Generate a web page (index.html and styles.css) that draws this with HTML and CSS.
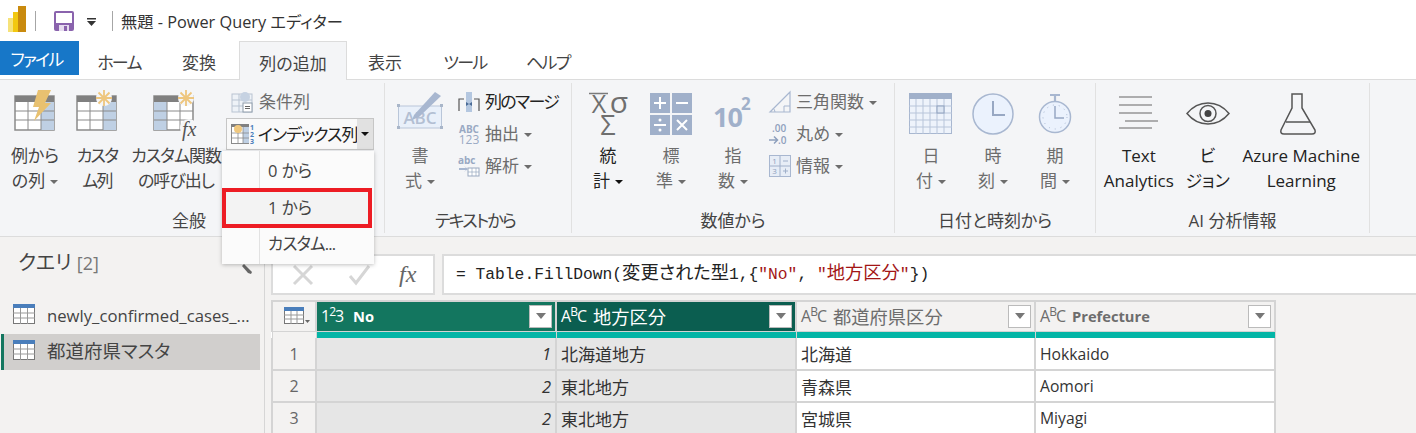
FILE: index.html
```html
<!DOCTYPE html>
<html lang="ja">
  <head>
    <meta charset="utf-8">
    <title>無題 - Power Query エディター</title>
    <link rel="stylesheet" href="styles.css">
  </head>
  <body>
    <div class="titlebar">
      <svg class="logo" width="20" height="26" viewBox="0 0 20 26">
        <rect x="0" y="12" width="9" height="14" fill="#f6e27a"/>
        <rect x="5" y="6" width="8" height="20" fill="#f2c811"/>
        <rect x="10" y="0" width="8" height="26" fill="#c98a0e"/>
      </svg>
      <span class="title-sep sep-a"></span>
      <svg class="save" width="20" height="20" viewBox="0 0 20 20">
        <rect x="0" y="0" width="20" height="20" rx="2" fill="#8a63ad"/>
        <rect x="2" y="2" width="16" height="10" fill="#fff"/>
        <rect x="5" y="14" width="10" height="6" fill="#e6dcef"/>
        <rect x="10" y="15" width="3" height="5" fill="#8a63ad"/>
      </svg>
      <svg class="qat-drop" width="9" height="8" viewBox="0 0 9 8">
        <rect x="0" y="0" width="9" height="1.500" fill="#333"/>
        <path d="M0 3h9L4.500 8z" fill="#333"/>
      </svg>
      <span class="title-sep sep-b"></span>
      <span class="title-text">無題 - Power Query エディター</span>
    </div>

    <div class="tabs">
      <div class="tab tab-file tight">ファイル</div>
      <div class="tab tab-home tight">ホーム</div>
      <div class="tab tab-conv">変換</div>
      <div class="tab tab-active">列の追加</div>
      <div class="tab tab-view">表示</div>
      <div class="tab tab-tool tight">ツール</div>
      <div class="tab tab-help tight">ヘルプ</div>
    </div>

    <div class="ribbon">
      <!-- 全般 -->
      <div class="group group-general">
        <div class="group-body">
          <div class="big w62">
            <svg class="big-icon" width="42" height="42" viewBox="0 -1 42 42">
              <rect x="1" y="6" width="39" height="34" fill="#fff" stroke="#8a8a8a" stroke-width="1.500"/>
              <rect x="1" y="6" width="39" height="6" fill="#808080"/>
              <rect x="27" y="12" width="13" height="28" fill="#bfd0e4"/>
              <path d="M1 21h39M1 30h39M14 12v28M27 12v28" stroke="#8a8a8a" fill="none"/>
              <path d="M24 0h13l-6 13h6L20 31l5-14h-6z" fill="#e8c170"/>
            </svg>
            <div class="big-label">例から<br>の列<i class="caret"></i></div>
          </div>
          <div class="big w62">
            <svg class="big-icon" width="42" height="42" viewBox="0 -1 42 42">
              <rect x="1" y="6" width="39" height="34" fill="#fff" stroke="#8a8a8a" stroke-width="1.500"/>
              <rect x="1" y="6" width="39" height="6" fill="#808080"/>
              <rect x="27" y="12" width="13" height="28" fill="#bfd0e4"/>
              <path d="M1 21h39M1 30h39M14 12v28M27 12v28" stroke="#8a8a8a" fill="none"/>
              <circle cx="28" cy="8" r="8" fill="#f5f6f8"/>
              <path d="M28 0v16M20 8h16M22.500 2.500l11 11M33.500 2.500l-11 11" stroke="#eec67e" stroke-width="1.800"/>
            </svg>
            <div class="big-label tight">カスタ<br>ム列</div>
          </div>
          <div class="big w96">
            <svg class="big-icon" width="46" height="42" viewBox="0 -1 46 42">
              <rect x="1" y="6" width="39" height="34" fill="#fff" stroke="#8a8a8a" stroke-width="1.500"/>
              <rect x="1" y="6" width="39" height="6" fill="#808080"/>
              <rect x="1" y="12" width="13" height="28" fill="#bfd0e4"/>
              <path d="M1 21h39M1 30h39M14 12v28M27 12v28" stroke="#8a8a8a" fill="none"/>
              <circle cx="33" cy="8" r="8" fill="#f5f6f8"/>
              <path d="M33 0v16M25 8h16M27.500 2.500l11 11M38.500 2.500l-11 11" stroke="#eec67e" stroke-width="1.800"/>
              <circle cx="36" cy="38" r="9" fill="#f5f6f8"/>
              <text x="29" y="46" class="fx-glyph">fx</text>
            </svg>
            <div class="big-label tight-s">カスタム関数<br>の呼び出し</div>
          </div>
          <div class="small-col small-col-general">
            <div class="small small-cond">
              <svg width="22" height="22" viewBox="0 0 22 22">
                <rect x="1" y="3" width="20" height="18" fill="#eef2f7" stroke="#b9c4d2"/>
                <path d="M1 9h20M1 15h20M8 3v18" stroke="#b9c4d2"/>
                <circle cx="14" cy="6" r="5" fill="#c6d2e2"/>
                <rect x="12" y="12" width="9" height="9" fill="#fff" stroke="#8e9baa"/>
                <path d="M14 15.500h5M14 17.500h5" stroke="#666"/>
              </svg>
              <span class="small-text muted">条件列</span>
            </div>
            <div class="split">
              <div class="split-main">
                <svg width="18" height="20" viewBox="0 0 18 20">
                  <rect x=".5" y=".5" width="17" height="19" fill="#fff" stroke="#8a8a8a"/>
                  <rect x="0" y="0" width="18" height="3" fill="#808080"/>
                  <rect x="12" y="3" width="6" height="16" fill="#bfd0e4"/>
                  <path d="M1 9h17M1 14h17M7 3v16M12 3v16" stroke="#8a8a8a" stroke-width=".8"/>
                  <circle cx="7" cy="5" r="4" fill="#f0c87e"/>
                </svg>
                <svg class="split-nums" width="6" height="20" viewBox="0 0 6 20">
                  <text x="0" y="6" class="nums-glyph">1</text>
                  <text x="0" y="13" class="nums-glyph">2</text>
                  <text x="0" y="20" class="nums-glyph">3</text>
                </svg>
                <span class="split-text tight-s">インデックス列</span>
              </div>
              <div class="split-arrow"><i class="caret caret-dark"></i></div>
            </div>
          </div>
        </div>
        <div class="group-label">全般</div>
      </div>

      <!-- テキストから -->
      <div class="group group-text">
        <div class="group-body">
          <div class="big w70">
            <svg class="big-icon" width="46" height="42" viewBox="0 0 46 42">
              <rect x="1.500" y="17" width="43" height="22" fill="#e9f0fa" stroke="#b9c6d9"/>
              <rect x="0" y="15" width="3" height="3" fill="#a9b6c9"/>
              <rect x="43" y="15" width="3" height="3" fill="#a9b6c9"/>
              <rect x="0" y="37" width="3" height="3" fill="#a9b6c9"/>
              <rect x="43" y="37" width="3" height="3" fill="#a9b6c9"/>
              <text x="23" y="35" class="abc-glyph">ABC</text>
              <path d="M17 26L38 3l6 4-22 21-7 3z" fill="#a8b7d0"/>
            </svg>
            <div class="big-label muted">書<br>式<i class="caret"></i></div>
          </div>
          <div class="small-col small-col-text">
            <div class="small">
              <svg width="22" height="22" viewBox="0 0 22 22">
                <path d="M1 20V8h5M21 20V8h-5" fill="none" stroke="#555" stroke-width="1.200"/>
                <rect x="8" y="1" width="6" height="20" fill="#b4c7e0"/>
                <path d="M8 11l3 2-3 2zM14 11l-3 2 3 2z" fill="#4a6a96"/>
              </svg>
              <span class="small-text dark tight">列のマージ</span>
            </div>
            <div class="small">
              <svg width="22" height="22" viewBox="0 0 22 22">
                <text x="11" y="10" class="mini-abc">ABC</text>
                <text x="11" y="21" class="mini-123">123</text>
              </svg>
              <span class="small-text muted">抽出<i class="caret"></i></span>
            </div>
            <div class="small">
              <svg width="22" height="22" viewBox="0 0 22 22">
                <text x="0" y="9" class="mini-abc-low">abc</text>
                <path d="M1 13h7l-2-2 4 3-4 3 2-2H1z" fill="#a8b7d0"/>
                <rect x="10" y="13" width="11" height="8" fill="#fff" stroke="#9aa9c0"/>
                <path d="M10 17h11M14 13v8M18 13v8" stroke="#9aa9c0" stroke-width=".7"/>
              </svg>
              <span class="small-text muted">解析<i class="caret"></i></span>
            </div>
          </div>
        </div>
        <div class="group-label tight">テキストから</div>
      </div>

      <!-- 数値から -->
      <div class="group group-num">
        <div class="group-body">
          <div class="big w72">
            <svg class="big-icon" width="42" height="42" viewBox="0 0 42 42">
              <path d="M2 4.500h19" stroke="#7a7a7a" stroke-width="1.500"/>
              <text x="12" y="24" class="stat-glyph">X</text>
              <text x="32" y="24" class="stat-sigma">σ</text>
              <text x="21" y="46" class="stat-sum">Σ</text>
            </svg>
            <div class="big-label dark">統<br>計<i class="caret caret-dark"></i></div>
          </div>
          <div class="big w54">
            <svg class="big-icon" width="42" height="42" viewBox="0 -4 42 42">
              <rect x="0" y="0" width="20" height="20" fill="#a0b0ca"/>
              <rect x="22" y="0" width="20" height="20" fill="#a0b0ca"/>
              <rect x="0" y="22" width="20" height="20" fill="#a0b0ca"/>
              <rect x="22" y="22" width="20" height="20" fill="#a0b0ca"/>
              <path d="M4 10h12M10 4v12M26 10h12M4 32h12M27 27l10 10M37 27L27 37" stroke="#fff" stroke-width="2"/>
              <circle cx="10" cy="27" r="1.500" fill="#fff"/>
              <circle cx="10" cy="37" r="1.500" fill="#fff"/>
            </svg>
            <div class="big-label muted">標<br>準<i class="caret"></i></div>
          </div>
          <div class="big w70">
            <svg class="big-icon" width="42" height="42" viewBox="0 0 42 42">
              <text x="1" y="38" class="pow-base">10</text>
              <text x="29" y="21" class="pow-exp">2</text>
            </svg>
            <div class="big-label muted">指<br>数<i class="caret"></i></div>
          </div>
          <div class="small-col small-col-num">
            <div class="small">
              <svg width="22" height="22" viewBox="0 0 22 22">
                <path d="M1 21L21 1v20z" fill="none" stroke="#a8b7d0" stroke-width="1.200"/>
                <path d="M6 21a6 6 0 0 0-2-4M15 21v-6h6" fill="none" stroke="#a8b7d0"/>
              </svg>
              <span class="small-text muted">三角関数<i class="caret"></i></span>
            </div>
            <div class="small">
              <svg width="22" height="22" viewBox="0 0 22 22">
                <text x="3" y="9" class="round-glyph">.00</text>
                <text x="9" y="21" class="round-glyph">.0</text>
                <path d="M0 17h8M5 13.500l3.500 3.500-3.500 3.500" fill="none" stroke="#8ea0bd" stroke-width="1.500"/>
              </svg>
              <span class="small-text muted">丸め<i class="caret"></i></span>
            </div>
            <div class="small">
              <svg width="22" height="22" viewBox="0 0 22 22">
                <rect x=".5" y=".5" width="21" height="21" fill="#e7edf6" stroke="#a8b7d0"/>
                <path d="M11 1v20M1 11h20M14 6h5M14 16h5M16.500 13.500v5" stroke="#a0b0ca" fill="none"/>
                <text x="5.500" y="9" class="info-glyph">1</text>
                <text x="5.500" y="19" class="info-glyph">3</text>
              </svg>
              <span class="small-text muted">情報<i class="caret"></i></span>
            </div>
          </div>
        </div>
        <div class="group-label">数値から</div>
      </div>

      <!-- 日付と時刻から -->
      <div class="group group-date">
        <div class="group-body">
          <div class="big w72">
            <svg class="big-icon" width="44" height="42" viewBox="0 -4 44 42">
              <rect x=".5" y=".5" width="42" height="40" fill="#eef3fb" stroke="#a8b7d0"/>
              <rect x="0" y="0" width="43" height="6" fill="#a0b0ca"/>
              <path d="M0 13h43M0 20h43M0 27h43M0 34h43M7 6v35M14 6v35M21 6v35M28 6v35M35 6v35" stroke="#b8c5da"/>
              <rect x="28" y="13" width="7" height="7" fill="#dde6f3" stroke="#8ea0bd"/>
            </svg>
            <div class="big-label muted">日<br>付<i class="caret"></i></div>
          </div>
          <div class="big w52">
            <svg class="big-icon" width="42" height="42" viewBox="0 -4 42 42">
              <circle cx="21" cy="21" r="20" fill="#ebf2fd" stroke="#a8b7d0" stroke-width="1.500"/>
              <path d="M21 8v14h12" fill="none" stroke="#98a8c3" stroke-width="2"/>
            </svg>
            <div class="big-label muted">時<br>刻<i class="caret"></i></div>
          </div>
          <div class="big w72">
            <svg class="big-icon" width="34" height="42" viewBox="0 -4 34 42">
              <path d="M12 2h10M17 2v6" stroke="#a8b7d0" stroke-width="2.200"/>
              <circle cx="17" cy="24" r="15.500" fill="#ebf2fd" stroke="#a8b7d0" stroke-width="1.500"/>
              <circle cx="17" cy="24" r="12" fill="none" stroke="#a8b7d0" stroke-dasharray="1 5"/>
              <path d="M17 13v12h9" fill="none" stroke="#98a8c3" stroke-width="1.500"/>
            </svg>
            <div class="big-label muted">期<br>間<i class="caret"></i></div>
          </div>
        </div>
        <div class="group-label">日付と時刻から</div>
      </div>

      <!-- AI 分析情報 -->
      <div class="group group-ai">
        <div class="group-body">
          <div class="big w86">
            <svg class="big-icon" width="40" height="42" viewBox="0 0 40 42">
              <path d="M0 8h33M0 16h33M0 24h33M6 32h33M0 39h33" stroke="#666" stroke-width="1.200"/>
            </svg>
            <div class="big-label dark">Text<br>Analytics</div>
          </div>
          <div class="big w52">
            <svg class="big-icon" width="44" height="42" viewBox="0 0 44 42">
              <path d="M1 24.500C8 16 16 14 22 14s14 2 21 10.500C36 33 28 35 22 35S8 33 1 24.500z" fill="none" stroke="#555" stroke-width="1.500"/>
              <circle cx="22" cy="24.500" r="8" fill="none" stroke="#555" stroke-width="1.500"/>
              <circle cx="22" cy="24.500" r="3.500" fill="#444"/>
            </svg>
            <div class="big-label dark">ビ<br>ジョン</div>
          </div>
          <div class="big w136">
            <svg class="big-icon flask" width="38" height="42" viewBox="0 0 38 42">
              <path d="M13 5h10v14l13 22q1 4-3 4H5q-4 0-3-4l11-22z" fill="none" stroke="#555" stroke-width="1.500"/>
              <path d="M7 33h24" stroke="#555" stroke-width="1.500"/>
            </svg>
            <div class="big-label dark">Azure Machine<br>Learning</div>
          </div>
        </div>
        <div class="group-label">AI 分析情報</div>
      </div>
    </div>

    <div class="main">
      <div class="queries">
        <div class="queries-title">
          <span>クエリ <span class="queries-count">[2]</span></span>
          <svg class="pin" width="10" height="10" viewBox="0 0 10 10">
            <path d="M0 2l2-2 8 8-1 2-3-1z" fill="#666"/>
          </svg>
        </div>
        <div class="query">
          <svg width="22" height="20" viewBox="0 0 22 20">
            <rect x=".5" y=".5" width="21" height="19" fill="#fff" stroke="#777"/>
            <rect x="0" y="0" width="22" height="4" fill="#4a7ebb"/>
            <path d="M0 9h22M0 14h22M7.500 4v16M14.500 4v16" stroke="#999"/>
          </svg>
          <span class="query-name query-latin">newly_confirmed_cases_...</span>
        </div>
        <div class="query query-on">
          <svg width="22" height="20" viewBox="0 0 22 20">
            <rect x=".5" y=".5" width="21" height="19" fill="#fff" stroke="#777"/>
            <rect x="0" y="0" width="22" height="4" fill="#4a7ebb"/>
            <path d="M0 9h22M0 14h22M7.500 4v16M14.500 4v16" stroke="#999"/>
          </svg>
          <span class="query-name">都道府県マスタ</span>
        </div>
      </div>

      <div class="content">
        <div class="formula-row">
          <div class="fx-box">
            <svg width="24" height="24" viewBox="0 0 24 24">
              <path d="M3 3l18 18M21 3L3 21" stroke="#d6d6d6" stroke-width="3"/>
            </svg>
            <svg class="fx-check" width="24" height="24" viewBox="0 0 24 24">
              <path d="M3 13l6 7L22 3" fill="none" stroke="#d6d6d6" stroke-width="3"/>
            </svg>
            <span class="fx-text">fx</span>
          </div>
          <div class="formula">= Table.FillDown(<span class="code-jp">変更された型</span>1,{<span class="str">"No"</span>, <span class="str">"<span class="code-jp">地方区分</span>"</span>})</div>
        </div>

        <table class="grid">
          <colgroup>
            <col class="col-idx">
            <col class="col-no">
            <col class="col-area">
            <col class="col-pref">
            <col class="col-en">
          </colgroup>
          <thead>
            <tr class="head">
              <th class="corner">
                <svg width="26" height="18" viewBox="0 0 26 18">
                  <rect x=".5" y=".5" width="19" height="16" fill="#fff" stroke="#777"/>
                  <rect x="0" y="0" width="20" height="4" fill="#4a7ebb"/>
                  <path d="M0 8h20M0 12h20M7 4v13M13 4v13" stroke="#999"/>
                  <path d="M21 13h5l-2.500 3z" fill="#666"/>
                </svg>
              </th>
              <th class="h-sel">
                <div class="th-in"><span class="type">1<sup>2</sup>3</span><span class="th-latin">No</span><span class="filter"><i></i></span></div>
              </th>
              <th class="h-sel-dark">
                <div class="th-in"><span class="type">A<sup>B</sup>C</span><span class="th-jp">地方区分</span><span class="filter"><i></i></span></div>
              </th>
              <th class="h-plain">
                <div class="th-in"><span class="type">A<sup>B</sup>C</span><span class="th-jp">都道府県区分</span><span class="filter"><i></i></span></div>
              </th>
              <th class="h-plain">
                <div class="th-in"><span class="type">A<sup>B</sup>C</span><span class="th-latin">Prefecture</span><span class="filter"><i></i></span></div>
              </th>
            </tr>
            <tr class="quality">
              <th class="q-blank"></th><th></th><th></th><th></th><th></th>
            </tr>
          </thead>
          <tbody>
            <tr class="row-first">
              <td class="idx">1</td><td class="num sel">1</td><td class="sel">北海道地方</td><td>北海道</td><td class="en">Hokkaido</td>
            </tr>
            <tr>
              <td class="idx">2</td><td class="num sel">2</td><td class="sel">東北地方</td><td>青森県</td><td class="en">Aomori</td>
            </tr>
            <tr>
              <td class="idx">3</td><td class="num sel">2</td><td class="sel">東北地方</td><td>宮城県</td><td class="en">Miyagi</td>
            </tr>
          </tbody>
        </table>
      </div>
    </div>

    <!-- インデックス列のドロップダウン -->
    <div class="menu">
      <div class="menu-item">0 から</div>
      <div class="menu-item menu-hot">1 から</div>
      <div class="menu-item menu-last">カスタム...</div>
    </div>
  </body>
</html>
```

FILE: styles.css
```css
* {
  box-sizing: border-box;
}

html,
body {
  margin: 0;
  height: 433px;
  overflow: hidden;
}

body {
  position: relative;
  background-color: #f3f2f1;
  color: #333;
  font-family: "Open Sans", "Noto Sans CJK JP", sans-serif;
  font-size: 17px;
  font-feature-settings: "palt";
}

svg {
  overflow: visible;
  flex: none;
}

/* カタカナが多い文字列は詰める */
.tight {
  letter-spacing: -1.700px;
}

.tight-s {
  letter-spacing: -1px;
}

/* タイトルバー */
.titlebar {
  display: flex;
  align-items: center;
  height: 41px;
  background-color: #fff;
}

.logo {
  margin: 0 0 4px 8px;
}

.title-sep {
  width: 1px;
  height: 20px;
  background-color: #a6a6a6;
}

.sep-a {
  margin-left: 7px;
}

.save {
  margin-left: 18px;
}

.qat-drop {
  margin: 3px 0 0 13px;
}

.sep-b {
  margin-left: 16px;
}

.title-text {
  margin-left: 8px;
  font-size: 16.300px;
  color: #333;
}

/* タブ */
.tabs {
  display: flex;
  height: 39px;
  background-color: #fff;
  border-bottom: 1px solid #dcdcdc;
}

.tab {
  display: flex;
  align-items: center;
  justify-content: center;
  height: 38px;
  padding-top: 2px;
  font-size: 17px;
  color: #444;
}

.tab-file {
  width: 79px;
  height: 34px;
  padding: 0 6px 0 0;
  background-color: #1777c8;
  color: #fff;
}

.tab-home,
.tab-conv {
  width: 80px;
}

.tab-active {
  width: 108px;
  height: 39px;
  background-color: #f4f5f7;
  border: 1px solid #dcdcdc;
  border-bottom: none;
}

.tab-view {
  width: 76px;
}

.tab-tool {
  width: 84px;
}

.tab-help {
  width: 82px;
}

/* リボン */
.ribbon {
  display: flex;
  height: 157px;
  background-color: #f4f5f7;
  border-bottom: 1px solid #dcdcdc;
}

.group {
  display: flex;
  flex-direction: column;
  height: 150px;
  margin-top: 3px;
  border-right: 1px solid #e1e1e1;
}

.group-general {
  width: 385px;
  padding-left: 4px;
}

.group-general .group-label {
  margin-right: 10px;
}

.group-text {
  width: 187px;
}

.group-text .group-label {
  margin-right: 6px;
}

.group-num {
  width: 323px;
}

.group-date {
  width: 201px;
}

.group-ai {
  width: 274px;
}

.group-body {
  display: flex;
  flex: 1;
  padding-top: 6px;
}

.group-label {
  height: 24px;
  text-align: center;
  font-size: 17px;
  line-height: 24px;
  color: #444;
}

.big {
  display: flex;
  flex-direction: column;
  align-items: center;
}

.big-icon {
  height: 42px;
}

.flask {
  margin-right: 6px;
}

.big-label {
  margin-top: 12px;
  text-align: center;
  font-size: 17px;
  line-height: 25px;
  color: #444;
  white-space: nowrap;
}

.w52 {
  width: 52px;
}

.w54 {
  width: 54px;
}

.w62 {
  width: 62px;
}

.w70 {
  width: 70px;
}

.w72 {
  width: 72px;
}

.w86 {
  width: 86px;
}

.w96 {
  width: 96px;
}

.w136 {
  width: 136px;
}

.muted {
  color: #6d6d6d;
}

.dark {
  color: #222;
}

.caret {
  display: inline-block;
  margin-left: 5px;
  vertical-align: middle;
  border-left: 4px solid transparent;
  border-right: 4px solid transparent;
  border-top: 4px solid #6d6d6d;
}

.caret-dark {
  border-top-color: #111;
}

.small-col {
  display: flex;
  flex-direction: column;
  margin-top: -3px;
}

.small-col-general {
  margin-left: 2px;
}

.small-col-text {
  margin-left: 3px;
}

.small-col-num {
  margin-left: 1px;
}

.small {
  display: flex;
  align-items: center;
  gap: 5px;
  height: 32px;
}

.small-cond {
  gap: 6px;
  padding-left: 5px;
}

.small-text {
  margin-bottom: 4px;
  font-size: 17px;
  white-space: nowrap;
}

.split {
  display: flex;
  width: 148px;
  height: 32px;
  border: 1px solid #c6c6c6;
  background-color: #f9f9f9;
}

.split-main {
  display: flex;
  flex: 1;
  align-items: center;
  padding-left: 4px;
}

.split-nums {
  margin-left: 1px;
}

.split-text {
  margin: 0 0 2px 2px;
  font-size: 17px;
  color: #222;
  white-space: nowrap;
}

.split-arrow {
  display: flex;
  align-items: center;
  justify-content: center;
  width: 17px;
  background-color: #e1e1e1;
}

.split-arrow .caret {
  margin-left: 0;
}

/* SVG 内の文字 */
.fx-glyph {
  font-family: "Liberation Serif", serif;
  font-style: italic;
  font-size: 20px;
  fill: #555;
}

.nums-glyph {
  font-family: "Open Sans", sans-serif;
  font-size: 7px;
  font-weight: 700;
  fill: #4a7ebb;
}

.abc-glyph {
  font-family: "Open Sans", sans-serif;
  font-size: 17px;
  font-weight: 600;
  text-anchor: middle;
  fill: #b3bfd3;
}

.mini-abc {
  font-family: "Open Sans", sans-serif;
  font-size: 10px;
  font-weight: 700;
  text-anchor: middle;
  fill: #99a9c3;
}

.mini-123 {
  font-family: "Open Sans", sans-serif;
  font-size: 12px;
  text-anchor: middle;
  fill: #99a9c3;
}

.mini-abc-low {
  font-family: "Open Sans", sans-serif;
  font-size: 10px;
  font-weight: 700;
  fill: #99a9c3;
}

.stat-glyph {
  font-family: "Open Sans", sans-serif;
  font-size: 25px;
  text-anchor: middle;
  fill: #6f6f6f;
}

.stat-sigma {
  font-family: "Open Sans", sans-serif;
  font-size: 30px;
  text-anchor: middle;
  fill: #6f6f6f;
}

.stat-sum {
  font-family: "Open Sans", sans-serif;
  font-size: 27px;
  text-anchor: middle;
  fill: #6f6f6f;
}

.pow-base {
  font-family: "Open Sans", sans-serif;
  font-size: 27px;
  font-weight: 700;
  letter-spacing: -1px;
  fill: #a0b0ca;
}

.pow-exp {
  font-family: "Open Sans", sans-serif;
  font-size: 17px;
  font-weight: 700;
  fill: #a0b0ca;
}

.round-glyph {
  font-family: "Open Sans", sans-serif;
  font-size: 10px;
  font-weight: 600;
  fill: #8ea0bd;
}

.info-glyph {
  font-family: "Open Sans", sans-serif;
  font-size: 8px;
  text-anchor: middle;
  fill: #8ea0bd;
}

/* 下部 */
.main {
  display: flex;
  height: 196px;
}

.queries {
  width: 265px;
  height: 196px;
  padding-top: 13px;
  border-right: 1px solid #d6d6d6;
}

.queries-title {
  display: flex;
  justify-content: space-between;
  height: 48px;
  padding: 0 12px 0 18px;
  font-size: 20px;
  line-height: 26px;
  color: #444;
}

.queries-count {
  font-size: 18px;
  color: #777;
}

.pin {
  margin-top: 14px;
}

.query {
  display: flex;
  align-items: center;
  gap: 12px;
  width: 259px;
  height: 36px;
  padding-left: 12px;
  margin-left: 1px;
  font-size: 18.500px;
  color: #444;
  border-left: 3px solid transparent;
}

.query svg {
  margin-left: -3px;
  margin-top: -4px;
}

.query-on {
  background-color: #d1cfcd;
  border-left-color: #13765f;
}

.query-on .query-name {
  margin-bottom: 4px;
}

.query-name {
  white-space: nowrap;
}

.query-latin {
  margin-bottom: 2px;
  font-size: 16.700px;
}

.content {
  flex: 1;
  padding: 17px 0 0 6px;
}

.formula-row {
  display: flex;
  gap: 7px;
  height: 41px;
}

.fx-box {
  display: flex;
  align-items: center;
  gap: 28px;
  width: 164px;
  padding-left: 18px;
  background-color: #fff;
  border: 2px solid #dcdcdc;
}

.fx-check {
  margin-left: 4px;
}

.fx-text {
  font-family: "Liberation Serif", serif;
  font-style: italic;
  font-size: 24px;
  color: #666;
}

.formula {
  flex: 1;
  padding-left: 12px;
  line-height: 37px;
  background-color: #fff;
  border: 1px solid #dcdcdc;
  border-width: 2px 0 2px 2px;
  font-family: "Liberation Mono", "Noto Sans CJK JP", monospace;
  font-size: 16.300px;
  color: #222;
  white-space: nowrap;
}

.code-jp {
  font-size: 18.300px;
}

.str {
  color: #a31515;
}

/* テーブル */
.grid {
  width: 1003px;
  margin-top: 5px;
  table-layout: fixed;
  border-collapse: collapse;
  background-color: #fff;
  font-size: 17px;
}

.col-idx {
  width: 44px;
}

.col-no {
  width: 240px;
}

.col-area {
  width: 240px;
}

.col-pref {
  width: 239px;
}

.col-en {
  width: 240px;
}

.grid th,
.grid td {
  padding: 0;
  border: 2px solid #d4d4d4;
}

.head {
  height: 30px;
}

.grid .head th {
  border-bottom-width: 1px;
}

.grid .corner {
  background-color: #f3f2f1;
  padding-left: 4px;
  text-align: left;
}

.corner svg {
  display: block;
  margin-left: 7px;
}

.h-sel {
  background-color: #13765f;
  color: #fff;
}

.h-sel-dark {
  background-color: #0b5e50;
  color: #fff;
}

.h-plain {
  background-color: #f3f2f1;
  color: #6d6d6d;
}

.th-in {
  display: flex;
  align-items: center;
  height: 28px;
  padding: 0 3px 0 4px;
}

.type {
  flex: none;
  width: 26px;
  text-align: left;
  font-size: 16px;
  font-weight: 400;
  letter-spacing: -1px;
}

.type sup {
  font-size: 12px;
  line-height: 0;
}

.th-latin {
  flex: 1;
  margin-left: 6px;
  text-align: left;
  font-size: 14.700px;
  font-weight: 700;
}

.th-jp {
  flex: 1;
  margin-left: 6px;
  text-align: left;
  font-size: 18.300px;
  font-weight: 400;
}

.filter {
  display: flex;
  align-items: center;
  justify-content: center;
  flex: none;
  width: 23px;
  height: 23px;
  background-color: #fff;
  border: 1px solid #bbb;
}

.filter i {
  border-left: 5px solid transparent;
  border-right: 5px solid transparent;
  border-top: 6px solid #777;
}

.grid .quality {
  height: 7px;
}

.grid .quality th {
  background-color: #03b5a6;
  border-top-width: 1px;
  border-bottom-width: 0;
  border-left-width: 1px;
  border-right-width: 1px;
}

.grid .quality .q-blank {
  background-color: #f3f2f1;
}

.grid .row-first td {
  border-top-width: 0;
}

.grid tbody tr {
  height: 32px;
}

.grid td {
  padding: 0 4px;
  color: #333;
  white-space: nowrap;
}

.grid .en {
  font-size: 15.700px;
}

.grid .idx {
  background-color: #f3f2f1;
  text-align: center;
  font-size: 16px;
  color: #666;
}

.grid .sel {
  background-color: #e6e6e6;
}

.grid .num {
  text-align: right;
  font-size: 16.500px;
  font-style: italic;
}

/* メニュー */
.menu {
  position: absolute;
  left: 222px;
  top: 151px;
  width: 152px;
  height: 113px;
  background-color: #fbfbfb;
  background-image: linear-gradient(#e2e2e2, #e2e2e2);
  background-size: 1px 100%;
  background-position: 37px 0;
  background-repeat: no-repeat;
  box-shadow: 0 1px 4px rgba(0, 0, 0, 0.25);
}

.menu-item {
  display: flex;
  align-items: center;
  height: 37px;
  padding-left: 46px;
  font-size: 16.500px;
  color: #444;
}

.menu-hot {
  width: 150px;
  height: 40px;
  background-color: #f3f3f3;
  border: 4px solid #ed1c24;
  padding: 0 0 3px 42px;
}

.menu-last {
  height: 36px;
  padding-bottom: 6px;
  letter-spacing: -0.800px;
}
```
